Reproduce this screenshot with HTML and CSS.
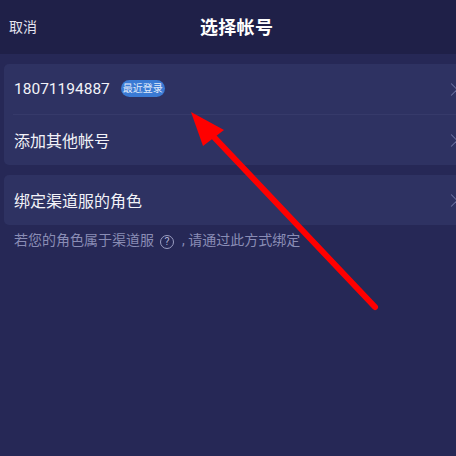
FILE: index.html
```html
<!DOCTYPE html>
<html lang="zh">
<head>
<meta charset="utf-8">
<link rel="stylesheet" href="styles.css">
</head>
<body>
<div class="page">
  <header class="topbar">
    <span class="cancel">取消</span>
    <span class="title">选择帐号</span>
  </header>
  <main class="content">
    <section class="card">
      <div class="row">
        <span class="label num">18071194887</span>
        <span class="badge">最近登录</span>
        <span class="chev"></span>
      </div>
      <div class="divider"></div>
      <div class="row">
        <span class="label">添加其他帐号</span>
        <span class="chev"></span>
      </div>
    </section>
    <section class="card">
      <div class="row">
        <span class="label">绑定渠道服的角色</span>
        <span class="chev"></span>
      </div>
    </section>
    <p class="hint">若您的角色属于渠道服<span class="qmark">?</span>, 请通过此方式绑定</p>
  </main>
  <svg class="arrow" width="456" height="456" viewBox="0 0 456 456">
    <line x1="375" y1="307" x2="212" y2="135" stroke="#ff0000" stroke-width="6" stroke-linecap="round"/>
    <polygon points="191,112 224,130 203,146" fill="#ff0000"/>
  </svg>
</div>
</body>
</html>
```
FILE: styles.css
```css
html, body {
  margin: 0;
  padding: 0;
}
body {
  width: 456px;
  height: 456px;
  overflow: hidden;
  background: #262856;
  font-family: Roboto, "Noto Sans CJK SC", sans-serif;
  color: #f2f2f8;
}
.page {
  position: relative;
  width: 456px;
  height: 456px;
}
.topbar {
  height: 54px;
  background: #1f2048;
  display: grid;
  grid-template-columns: 191px auto;
  align-items: center;
  padding-left: 9px;
  box-sizing: border-box;
}
.cancel {
  font-size: 14px;
  color: #e4e4ef;
  margin-top: -2px;
}
.title {
  font-size: 18px;
  font-weight: 700;
  color: #ffffff;
  letter-spacing: 0.3px;
  margin-top: -2px;
}
.content {
  padding: 10px 0 0 4px;
  display: flex;
  flex-direction: column;
  gap: 10px;
}
.card {
  width: 464px;
  background: #2e3262;
  border-radius: 5px;
  display: flex;
  flex-direction: column;
}
.row {
  height: 50px;
  display: flex;
  align-items: center;
  padding-left: 10px;
  padding-right: 8px;
  box-sizing: border-box;
}
.label {
  font-size: 16px;
  color: #f2f2f8;
}
.num {
  font-size: 15.5px;
}
.badge {
  margin-left: 11px;
  height: 17px;
  padding: 0 2px;
  border-radius: 9px;
  background: #3a7ad4;
  color: #e3ecfb;
  font-size: 10px;
  line-height: 17px;
  margin-top: -1px;
}
.chev {
  margin-left: auto;
  width: 8px;
  height: 8px;
  border-right: 1px solid #6d72a2;
  border-top: 1px solid #6d72a2;
  transform: rotate(45deg);
  margin-right: 4px;
}
.divider {
  height: 1px;
  background: #363a6a;
  margin-left: 9px;
}
.hint {
  margin: -5px 0 0 10px;
  font-size: 14px;
  color: #8a8db5;
  line-height: 20px;
}
.qmark {
  display: inline-block;
  width: 12px;
  height: 12px;
  border: 1px solid #9a9dc2;
  border-radius: 50%;
  font-size: 10.5px;
  line-height: 12px;
  text-align: center;
  color: #b0b3d2;
  margin: 0 8px 0 6px;
  vertical-align: 0px;
}
.arrow {
  position: absolute;
  left: 0;
  top: 0;
  pointer-events: none;
}
```
